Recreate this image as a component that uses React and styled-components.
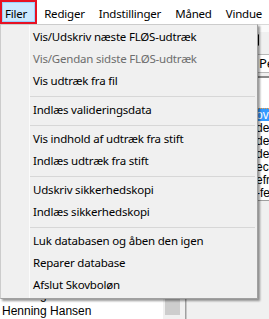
import React from "react";
import styled, { createGlobalStyle } from "styled-components";

const GlobalStyle = createGlobalStyle`
  html, body {
    margin: 0;
    padding: 0;
    background: #f0f0f0;
  }
`;

const menuTitles = ["Filer", "Rediger", "Indstillinger", "Måned", "Vindue"];

const fileMenu = [
  { label: "Vis/Udskriv næste FLØS-udtræk" },
  { label: "Vis/Gendan sidste FLØS-udtræk", disabled: true },
  { label: "Vis udtræk fra fil" },
  "sep",
  { label: "Indlæs valideringsdata" },
  "sep",
  { label: "Vis indhold af udtræk fra stift" },
  { label: "Indlæs udtræk fra stift" },
  "sep",
  { label: "Udskriv sikkerhedskopi" },
  { label: "Indlæs sikkerhedskopi" },
  "sep",
  { label: "Luk databasen og åben den igen" },
  { label: "Reparer database" },
  { label: "Afslut Skovboløn" },
];

const periodRows = ["december", "december", "december", "ecember", "efrivet", "-februar"];

function App() {
  return (
    <Screen>
      <GlobalStyle />
      <MenuBar>
        {menuTitles.map((t, i) => (
          <MenuTitle key={t} $active={i === 0}>
            {t}
          </MenuTitle>
        ))}
      </MenuBar>

      <Workspace>
        <LeftPane>
          <ListBox>
            <Names>
              <NameRow>Henning Andersen</NameRow>
              <NameRow>Henning Hansen</NameRow>
            </Names>
            <ScrollTrack>
              <ScrollThumb />
            </ScrollTrack>
          </ListBox>
        </LeftPane>
        <Splitter />
        <RightPane>
          <TabStrip />
          <ToolRow>
            <ScrollArrow />
          </ToolRow>
          <FieldRow>
            <Field>Periode</Field>
          </FieldRow>
          <Grid>
            <GridSpacer />
            <GridRow $selected>
              <Cell>overført</Cell>
            </GridRow>
            {periodRows.map((r, i) => (
              <GridRow key={i}>
                <Cell>{r}</Cell>
              </GridRow>
            ))}
          </Grid>
          <Filler />
        </RightPane>
      </Workspace>

      <Dropdown>
        {fileMenu.map((item, i) =>
          item === "sep" ? (
            <Separator key={i} />
          ) : (
            <MenuEntry key={i} $disabled={item.disabled}>
              {item.label}
            </MenuEntry>
          )
        )}
      </Dropdown>
    </Screen>
  );
}

export default App;

const Screen = styled.div`
  position: relative;
  width: 269px;
  height: 319px;
  overflow: hidden;
  display: flex;
  flex-direction: column;
  background: #f0f0f0;
  font-family: "Noto Sans", "Open Sans", sans-serif;
  font-size: 11.5px;
  letter-spacing: -0.2px;
  color: #000;
`;

const MenuBar = styled.div`
  display: flex;
  height: 24px;
  flex-shrink: 0;
  background: #fff;
  white-space: nowrap;
`;

const MenuTitle = styled.div`
  box-sizing: border-box;
  height: 24px;
  padding: 6px 7px 0 7px;
  line-height: 16px;
  ${(p) =>
    p.$active &&
    `
    padding: 4px 8px 0 3px;
    border: 2px solid #e81123;
    background: #cce8ff;
    box-shadow: inset 0 0 0 1px #99d1ff;
  `}
`;

const Workspace = styled.div`
  flex: 1;
  display: flex;
  min-height: 0;
`;

const LeftPane = styled.div`
  width: 185px;
  flex-shrink: 0;
  display: flex;
  flex-direction: column;
  justify-content: flex-end;
  background: #fff;
  border-right: 1px solid #a0a0a0;
`;

const ListBox = styled.div`
  display: flex;
  align-items: flex-end;
`;

const Names = styled.div`
  flex: 1;
  padding-left: 2px;
`;

const NameRow = styled.div`
  height: 16px;
  line-height: 16px;
  font-family: "Liberation Sans", Arial, sans-serif;
  font-size: 12px;
  letter-spacing: 0;
  white-space: nowrap;
`;

const ScrollTrack = styled.div`
  width: 22px;
  align-self: stretch;
  background: #f0f0f0;
  display: flex;
  align-items: flex-end;
  padding: 0 5px 4px 2px;
  box-sizing: border-box;
`;

const ScrollThumb = styled.div`
  width: 15px;
  height: 16px;
  background: #cdcdcd;
`;

const Splitter = styled.div`
  width: 3px;
  background: #f0f0f0;
  border-right: 1px solid #c8c8c8;
`;

const RightPane = styled.div`
  flex: 1;
  display: flex;
  flex-direction: column;
  padding-left: 68px;
  background: #f0f0f0;
`;

const TabStrip = styled.div`
  height: 7px;
  border-top: 1px solid #d9d9d9;
  background: #fafafa;
`;

const ToolRow = styled.div`
  height: 15px;
  display: flex;
  align-items: center;
`;

const ScrollArrow = styled.div`
  width: 0;
  height: 0;
  margin-left: -3px;
  border-top: 6px solid transparent;
  border-bottom: 6px solid transparent;
  border-right: 7px solid #000;
`;

const FieldRow = styled.div`
  height: 31px;
  padding-top: 7px;
  box-sizing: border-box;
  border-bottom: 2px solid #8a8a8a;
  background: #f0f0f0;
`;

const Field = styled.div`
  height: 17px;
  padding-left: 3px;
  line-height: 17px;
  border: 1px solid #b8b8b8;
  background: #fff;
  font-size: 13px;
  letter-spacing: 0;
`;

const Grid = styled.div`
  display: flex;
  flex-direction: column;
  background: #fff;
  border-bottom: 1px solid #a0a0a0;
  height: 122px;
  overflow: hidden;
`;

const GridSpacer = styled.div`
  height: 30px;
  flex-shrink: 0;
`;

const GridRow = styled.div`
  height: 13px;
  flex-shrink: 0;
  display: flex;
  align-items: center;
  box-sizing: border-box;
  background: ${(p) => (p.$selected ? "#3399ff" : "#fff")};
  color: ${(p) => (p.$selected ? "#fff" : "#000")};
  border-top: ${(p) => (p.$selected ? "1px dotted #f7a13a" : "none")};
`;

const Cell = styled.span`
  font-family: "Liberation Sans", Arial, sans-serif;
  font-size: 12px;
  letter-spacing: 0;
  padding-left: 1px;
  white-space: nowrap;
`;

const Filler = styled.div`
  flex: 1;
`;

const Dropdown = styled.div`
  position: absolute;
  left: 0;
  top: 24px;
  width: 258px;
  box-sizing: border-box;
  padding: 2px 0 1px 0;
  background: #f0f0f0
    linear-gradient(to right, transparent 28px, #fbfbfb 28px, #fbfbfb 29px, transparent 29px);
  border: 1px solid #cccccc;
  border-right-color: #a0a0a0;
  border-bottom-color: #a0a0a0;
  box-shadow: 2px 2px 2px rgba(0, 0, 0, 0.4);
`;

const MenuEntry = styled.div`
  height: 22px;
  line-height: 20px;
  padding: 0 0 2px 32px;
  box-sizing: border-box;
  white-space: nowrap;
  color: ${(p) => (p.$disabled ? "#6d6d6d" : "#000")};
`;

const Separator = styled.div`
  height: 7px;
  margin: 0 2px 0 29px;
  background: linear-gradient(#d7d7d7, #d7d7d7) center / 100% 1px no-repeat;
`;
